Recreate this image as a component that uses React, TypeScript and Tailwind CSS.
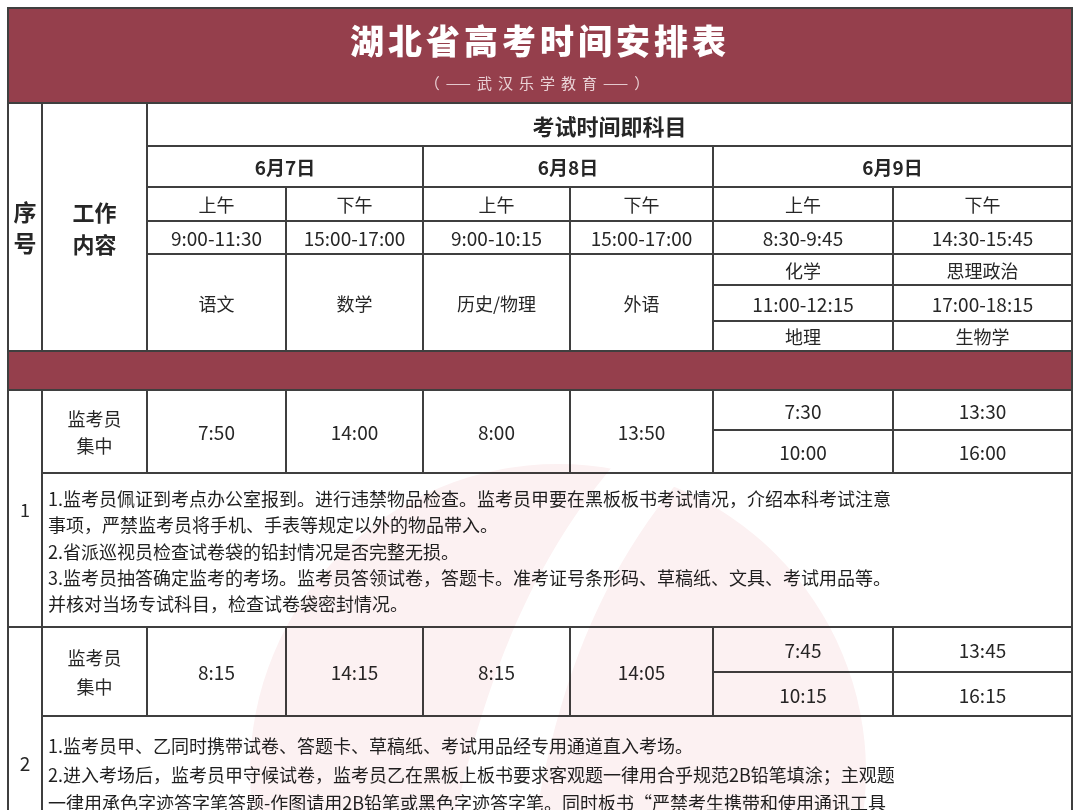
import type { ReactNode } from 'react';

const FONT = "font-['Noto_Sans_CJK_SC','Noto_Sans',sans-serif]";

// plain white table cell, centred text
function Cell({ className = '', children }: { className?: string; children?: ReactNode }) {
  return (
    <div className={`flex items-center justify-center bg-white text-[#262626] ${className}`}>
      {children}
    </div>
  );
}

function Notes({ className = '', lines }: { className?: string; lines: string[] }) {
  return (
    <div className={`bg-white pl-[5px] text-[18px] text-[#1f1f1f] ${className}`}>
      {lines.map((l, i) => (
        <div key={i} className="whitespace-nowrap">{l}</div>
      ))}
    </div>
  );
}

function Watermark() {
  return (
    <svg
      className="pointer-events-none absolute left-0 top-0 mix-blend-multiply"
      width={1081}
      height={900}
      viewBox="0 0 1081 900"
    >
      <circle cx={558} cy={772} r={308} fill="#fcf1f2" />
      <path d="M625 452 C 565 520, 480 640, 440 900 L 525 900 C 545 700, 600 570, 690 468 Z" fill="#ffffff" />
    </svg>
  );
}

export default function App() {
  const t = 'text-[19px] leading-none';
  const c = 'text-[18px] leading-none';
  return (
    <div className={`relative min-h-[900px] w-[1081px] bg-white ${FONT}`}>
      <div className="ml-[7px] pt-[7px] w-[1066px]">
        <div className="grid grid-cols-[32px_103px_137px_135px_145px_141px_178px_177px] grid-rows-[93px_41px_39px_32px_31px_29px_34px_28px_37px_38px_41px_152px_43px_42px_179px] gap-[2px] border-2 border-[#3f3f3f] bg-[#3f3f3f]">
          {/* banner */}
          <div className="col-span-8 flex flex-col items-center bg-[#953f4c] pt-[11px]">
            <div className="text-[34px] font-black leading-[40px] tracking-[4px] text-white">湖北省高考时间安排表</div>
            <div className="mt-[13px] text-[15px] leading-[20px] tracking-[6px] text-[#ead3d7]">（——武汉乐学教育——）</div>
          </div>

          {/* header */}
          <Cell className="col-start-1 row-start-2 row-span-7 flex-col text-[23px] font-bold leading-[31px] text-[#111]">
            <span>序</span>
            <span>号</span>
          </Cell>
          <Cell className="col-start-2 row-start-2 row-span-7 flex-col text-[22px] font-bold leading-[32px] text-[#111]">
            <span>工作</span>
            <span>内容</span>
          </Cell>
          <Cell className="col-start-3 col-span-6 row-start-2 text-[22px] font-bold leading-none text-[#111]">考试时间即科目</Cell>

          <Cell className="col-start-3 col-span-2 row-start-3 text-[19px] font-bold leading-none text-[#111]">6月7日</Cell>
          <Cell className="col-start-5 col-span-2 row-start-3 text-[19px] font-bold leading-none text-[#111]">6月8日</Cell>
          <Cell className="col-start-7 col-span-2 row-start-3 text-[19px] font-bold leading-none text-[#111]">6月9日</Cell>

          <Cell className={`col-start-3 row-start-4 ${c}`}>上午</Cell>
          <Cell className={`col-start-4 row-start-4 ${c}`}>下午</Cell>
          <Cell className={`col-start-5 row-start-4 ${c}`}>上午</Cell>
          <Cell className={`col-start-6 row-start-4 ${c}`}>下午</Cell>
          <Cell className={`col-start-7 row-start-4 ${c}`}>上午</Cell>
          <Cell className={`col-start-8 row-start-4 ${c}`}>下午</Cell>

          <Cell className={`col-start-3 row-start-5 ${t}`}>9:00-11:30</Cell>
          <Cell className={`col-start-4 row-start-5 ${t}`}>15:00-17:00</Cell>
          <Cell className={`col-start-5 row-start-5 ${t}`}>9:00-10:15</Cell>
          <Cell className={`col-start-6 row-start-5 ${t}`}>15:00-17:00</Cell>
          <Cell className={`col-start-7 row-start-5 ${t}`}>8:30-9:45</Cell>
          <Cell className={`col-start-8 row-start-5 ${t}`}>14:30-15:45</Cell>

          <Cell className={`col-start-3 row-start-6 row-span-3 ${c}`}>语文</Cell>
          <Cell className={`col-start-4 row-start-6 row-span-3 ${c}`}>数学</Cell>
          <Cell className={`col-start-5 row-start-6 row-span-3 ${c}`}>历史/物理</Cell>
          <Cell className={`col-start-6 row-start-6 row-span-3 ${c}`}>外语</Cell>
          <Cell className={`col-start-7 row-start-6 ${c}`}>化学</Cell>
          <Cell className={`col-start-8 row-start-6 ${c}`}>思理政治</Cell>
          <Cell className={`col-start-7 row-start-7 ${t}`}>11:00-12:15</Cell>
          <Cell className={`col-start-8 row-start-7 ${t}`}>17:00-18:15</Cell>
          <Cell className={`col-start-7 row-start-8 ${c}`}>地理</Cell>
          <Cell className={`col-start-8 row-start-8 ${c}`}>生物学</Cell>

          <div className="col-span-8 row-start-9 bg-[#953f4c]" />

          {/* 1 */}
          <Cell className={`col-start-1 row-start-10 row-span-3 ${c}`}>1</Cell>
          <Cell className="col-start-2 row-start-10 row-span-2 flex-col text-[18px] leading-[27px]">
            <span>监考员</span>
            <span>集中</span>
          </Cell>
          <Cell className={`col-start-3 row-start-10 row-span-2 ${t}`}>7:50</Cell>
          <Cell className={`col-start-4 row-start-10 row-span-2 ${t}`}>14:00</Cell>
          <Cell className={`col-start-5 row-start-10 row-span-2 ${t}`}>8:00</Cell>
          <Cell className={`col-start-6 row-start-10 row-span-2 ${t}`}>13:50</Cell>
          <Cell className={`col-start-7 row-start-10 ${t}`}>7:30</Cell>
          <Cell className={`col-start-8 row-start-10 ${t}`}>13:30</Cell>
          <Cell className={`col-start-7 row-start-11 ${t}`}>10:00</Cell>
          <Cell className={`col-start-8 row-start-11 ${t}`}>16:00</Cell>
          <Notes
            className="col-start-2 col-span-7 row-start-12 pt-[11px] leading-[26.3px]"
            lines={[
              '1.监考员佩证到考点办公室报到。进行违禁物品检查。监考员甲要在黑板板书考试情况，介绍本科考试注意',
              '事项，严禁监考员将手机、手表等规定以外的物品带入。',
              '2.省派巡视员检查试卷袋的铅封情况是否完整无损。',
              '3.监考员抽答确定监考的考场。监考员答领试卷，答题卡。准考证号条形码、草稿纸、文具、考试用品等。',
              '并核对当场专试科目，检查试卷袋密封情况。',
            ]}
          />

          {/* 2 */}
          <Cell className="col-start-1 row-start-13 row-span-3 text-[19px] leading-none">2</Cell>
          <Cell className="col-start-2 row-start-13 row-span-2 flex-col text-[18px] leading-[29px]">
            <span>监考员</span>
            <span>集中</span>
          </Cell>
          <Cell className={`col-start-3 row-start-13 row-span-2 ${t}`}>8:15</Cell>
          <Cell className={`col-start-4 row-start-13 row-span-2 ${t}`}>14:15</Cell>
          <Cell className={`col-start-5 row-start-13 row-span-2 ${t}`}>8:15</Cell>
          <Cell className={`col-start-6 row-start-13 row-span-2 ${t}`}>14:05</Cell>
          <Cell className={`col-start-7 row-start-13 ${t}`}>7:45</Cell>
          <Cell className={`col-start-8 row-start-13 ${t}`}>13:45</Cell>
          <Cell className={`col-start-7 row-start-14 ${t}`}>10:15</Cell>
          <Cell className={`col-start-8 row-start-14 ${t}`}>16:15</Cell>
          <Notes
            className="col-start-2 col-span-7 row-start-15 pt-[14px] leading-[28.5px]"
            lines={[
              '1.监考员甲、乙同时携带试卷、答题卡、草稿纸、考试用品经专用通道直入考场。',
              '2.进入考场后，监考员甲守候试卷，监考员乙在黑板上板书要求客观题一律用合乎规范2B铅笔填涂；主观题',
              '一律用承色字迹答字笔答题-作图请用2B铅笔或黑色字迹答字笔。同时板书“严禁考生携带和使用通讯工具',
              '进入考场”。',
            ]}
          />
        </div>
      </div>
      <Watermark />
    </div>
  );
}
